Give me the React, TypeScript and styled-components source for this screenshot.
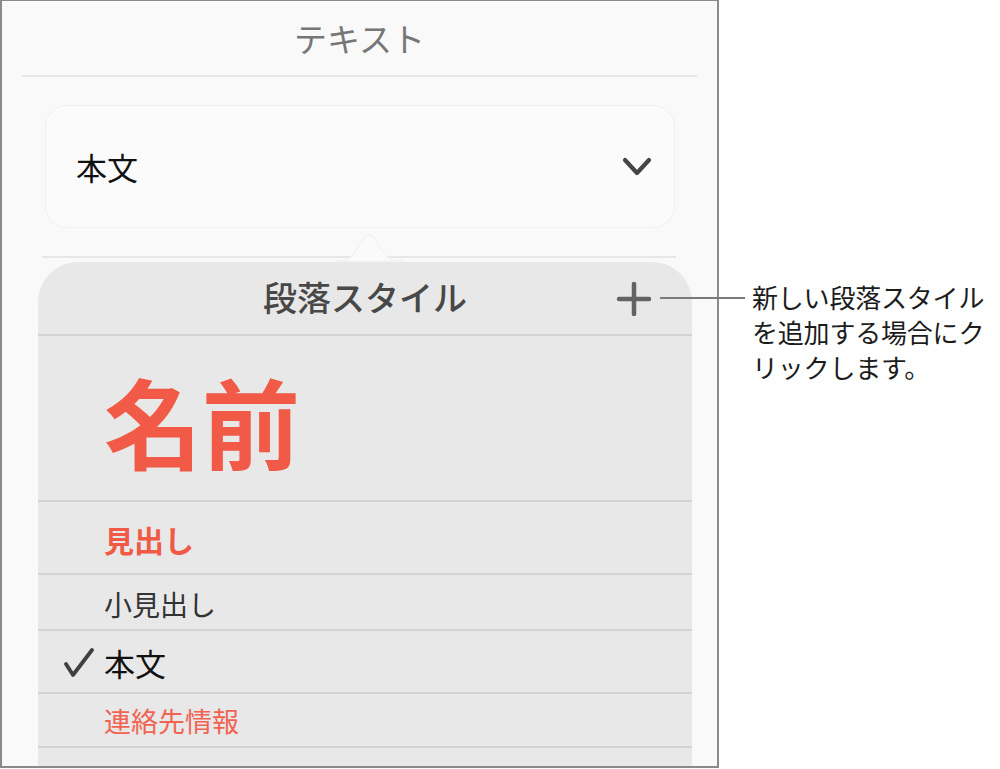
import React from "react";
import styled, { createGlobalStyle } from "styled-components";

const Global = createGlobalStyle`
  html, body { margin: 0; padding: 0; background: #ffffff; }
  body { font-family: "Noto Sans CJK JP", "Noto Sans", sans-serif; }
  * { box-sizing: border-box; }
`;

const Page = styled.div`
  position: relative;
  display: flex;
  width: 1000px;
  height: 769px;
  overflow: hidden;
`;

const Frame = styled.div`
  width: 719px;
  height: 768px;
  border: 2px solid #8a8a8a;
  border-top-width: 1px;
  background: #f9f9f9;
  overflow: hidden;
  display: flex;
  flex-direction: column;
`;

const Title = styled.div`
  height: 74px;
  display: flex;
  align-items: center;
  justify-content: center;
  font-size: 33px;
  font-weight: 400;
  color: #767676;
  line-height: 1;
  padding-bottom: 0;
`;

const Rule = styled.div<{ $l: number; $r: number }>`
  height: 2px;
  background: #e7e7e7;
  margin: 0 ${(p) => p.$r}px 0 ${(p) => p.$l}px;
  flex-shrink: 0;
`;

const Card = styled.div`
  margin: 28px 42px 28px 43px;
  height: 123px;
  border-radius: 22px;
  background: #fbfbfb;
  border: 1px solid #f1f1f1;
  display: flex;
  align-items: center;
  justify-content: space-between;
  padding: 0 22px 0 30px;
  flex-shrink: 0;
`;

const CardLabel = styled.span`
  font-size: 31px;
  color: #111111;
  line-height: 1;
`;

const Anchor = styled.div`
  position: relative;
  flex-shrink: 0;
`;

const Arrow = styled.svg`
  position: absolute;
  left: 333px;
  top: -26px;
  z-index: 2;
`;

const Popover = styled.div`
  margin: 4px 25px 0 36px;
  flex: 1;
  background: #e8e8e8;
  border-radius: 40px 40px 0 0;
  display: flex;
  flex-direction: column;
`;

const Header = styled.div`
  position: relative;
  height: 74px;
  border-bottom: 2px solid #d3d3d3;
  display: flex;
  align-items: center;
  justify-content: center;
  font-size: 34px;
  font-weight: 500;
  color: #484848;
  line-height: 1;
  padding-bottom: 3px;
  flex-shrink: 0;
`;

const AddButton = styled.svg`
  position: absolute;
  right: 40px;
  top: 20px;
`;

const Row = styled.div<{ $h: number; $pt: number }>`
  height: ${(p) => p.$h}px;
  border-bottom: 2px solid #d3d3d3;
  display: flex;
  align-items: center;
  padding: ${(p) => p.$pt}px 0 0 25px;
  flex-shrink: 0;
`;

const CheckSlot = styled.span`
  width: 41px;
  display: flex;
  align-items: center;
`;

const StyleName = styled.span<{ $size: number; $weight: number; $color: string }>`
  font-size: ${(p) => p.$size}px;
  font-weight: ${(p) => p.$weight};
  color: ${(p) => p.$color};
  line-height: 1;
`;

const Callout = styled.div`
  padding: 279px 0 0 33px;
  font-size: 26px;
  line-height: 35px;
  color: #1c1c1c;
  letter-spacing: -0.2px;
`;

const Leader = styled.div`
  position: absolute;
  left: 660px;
  top: 297px;
  width: 85px;
  height: 2px;
  background: #7a7a7a;
`;

const RED = "#f05a46";

const styles = [
  { name: "名前", h: 166, pt: 2, size: 98, weight: 700, color: RED },
  { name: "見出し", h: 73, pt: 2, size: 30, weight: 700, color: RED },
  { name: "小見出し", h: 56, pt: 3, size: 28, weight: 400, color: "#333333" },
  { name: "本文", h: 63, pt: 2, size: 31, weight: 400, color: "#111111", checked: true },
  { name: "連絡先情報", h: 54, pt: 0, size: 27, weight: 400, color: "#f26452" },
];

export default function App() {
  return (
    <Page>
      <Global />
      <Frame>
        <Title>テキスト</Title>
        <Rule $l={20} $r={20} />
        <Card>
          <CardLabel>本文</CardLabel>
          <svg width="30" height="20" viewBox="0 0 30 20">
            <path d="M3 3 L15 16 L27 3" fill="none" stroke="#454545" strokeWidth="4.2" strokeLinecap="round" strokeLinejoin="round" />
          </svg>
        </Card>
        <Anchor>
          <Rule $l={40} $r={41} />
          <Arrow width="68" height="32" viewBox="0 0 68 32">
            <path d="M0 31 C10 31 14 30 20 22 L30 7 C32 4 36 4 38 7 L48 22 C54 30 58 31 68 31 Z" fill="#fafafa" stroke="#f0f0f0" strokeWidth="1" />
          </Arrow>
        </Anchor>
        <Popover>
          <Header>
            段落スタイル
            <AddButton width="36" height="34" viewBox="0 0 36 34">
              <path d="M3 17 H33 M18 2 V32" stroke="#636363" strokeWidth="4.5" strokeLinecap="round" />
            </AddButton>
          </Header>
          {styles.map((s) => (
            <Row key={s.name} $h={s.h} $pt={s.pt}>
              <CheckSlot>
                {s.checked && (
                  <svg width="32" height="30" viewBox="0 0 32 30">
                    <path d="M3 16 L10 27 L29 2" fill="none" stroke="#404040" strokeWidth="3.8" strokeLinecap="round" strokeLinejoin="round" />
                  </svg>
                )}
              </CheckSlot>
              <StyleName $size={s.size} $weight={s.weight} $color={s.color}>
                {s.name}
              </StyleName>
            </Row>
          ))}
        </Popover>
      </Frame>
      <Callout>
        新しい段落スタイル
        <br />
        を追加する場合にク
        <br />
        リックします。
      </Callout>
      <Leader />
    </Page>
  );
}
